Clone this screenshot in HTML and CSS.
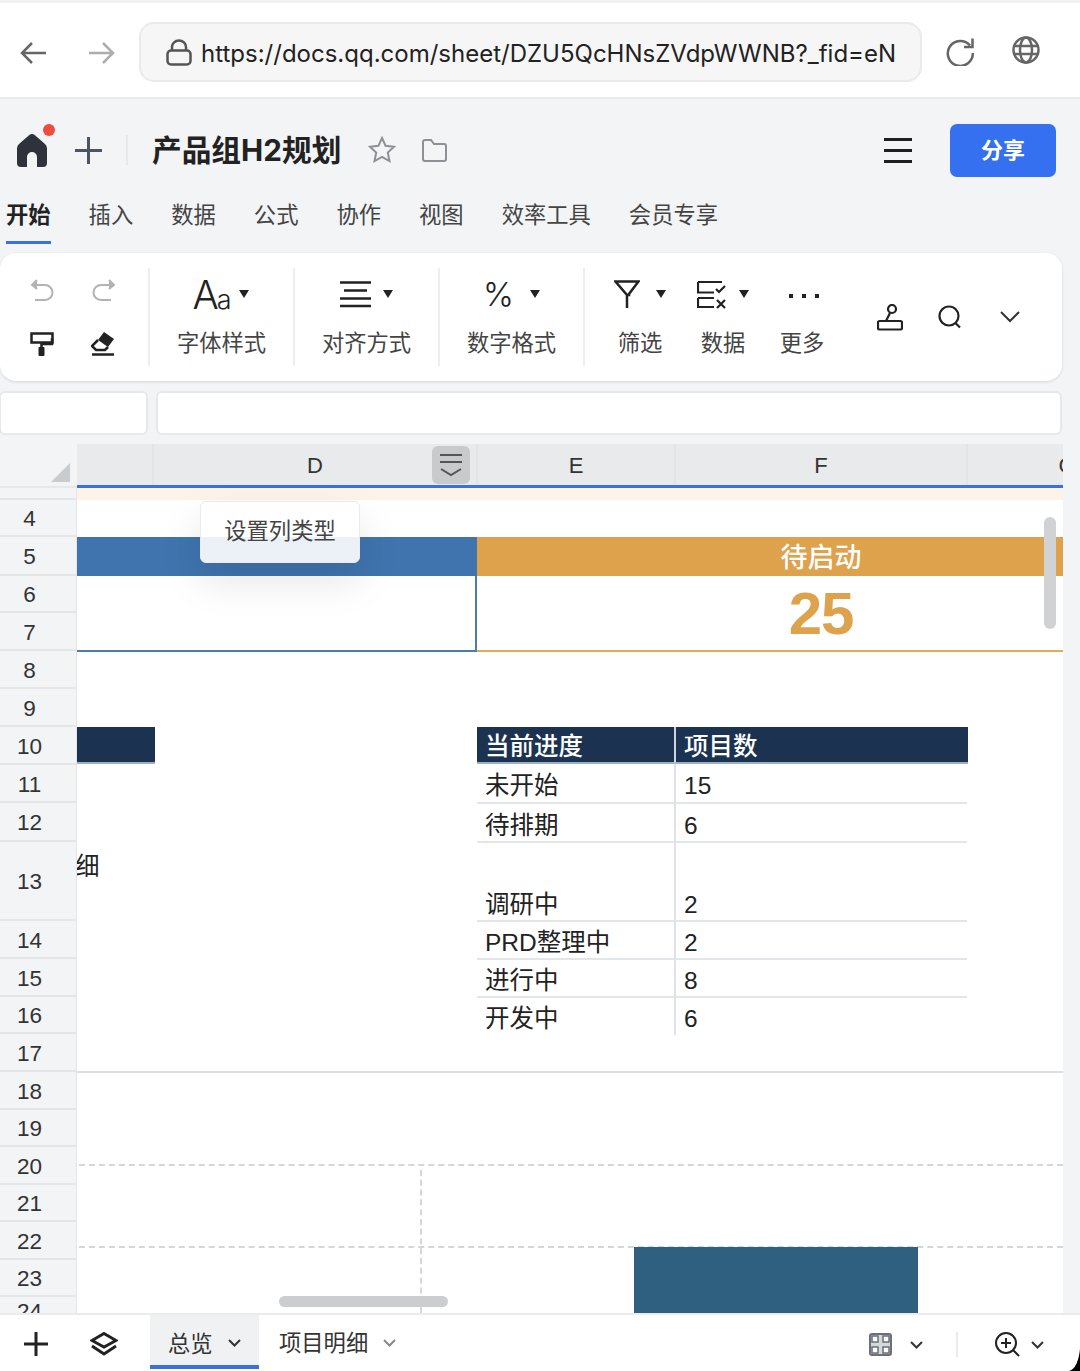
FILE: index.html
```html
<!DOCTYPE html>
<html lang="zh-CN">
<head>
<meta charset="utf-8">
<title>产品组H2规划</title>
<link rel="stylesheet" href="styles.css">
</head>
<body>
<div class="page">
  <header class="browser">
    <svg class="i back" width="26" height="22" viewBox="0 0 26 22"><path d="M12 1 2 11l10 10M2 11h24"/></svg>
    <svg class="i forward" width="26" height="22" viewBox="0 0 26 22"><path d="M14 1l10 10-10 10M24 11H0"/></svg>
    <div class="address">
      <svg class="i lock" width="26" height="27" viewBox="0 0 26 27"><rect x="1.5" y="11.5" width="23" height="14" rx="3.5"/><path d="M6 11V8a7 6.5 0 0 1 14 0v3"/></svg>
      <span class="url">https://docs.qq.com/sheet/DZU5QcHNsZVdpWWNB?_fid=eN</span>
    </div>
    <svg class="i reload" width="29" height="30" viewBox="0 0 29 30"><path d="M24 9.5A12.5 12.5 0 1 0 26.8 17"/><path d="M26.5 2.5v8.5H18"/></svg>
    <svg class="i globe" width="28" height="28" viewBox="0 0 28 28"><circle cx="14" cy="14" r="12.5"/><ellipse cx="14" cy="14" rx="6" ry="12.5"/><path d="M2 10h24M2 18h24"/></svg>
  </header>

  <section class="titlebar">
    <div class="home">
      <svg width="30" height="33" viewBox="0 0 30 33"><path class="home-shape" d="M15 0q1.500 0 3 1.300L28 10q2 1.800 2 4.500V29a4 4 0 0 1-4 4h-6V23a5 5 0 0 0-10 0v10H4a4 4 0 0 1-4-4V14.500Q0 11.800 2 10L12 1.300Q13.500 0 15 0z"/></svg>
      <span class="dot"></span>
    </div>
    <svg class="i plus" width="27" height="27" viewBox="0 0 27 27"><path d="M13.500 0v27M0 13.500h27"/></svg>
    <span class="vline"></span>
    <h1 class="doc-title">产品组H2规划</h1>
    <svg class="i star" width="28" height="28" viewBox="0 0 28 28"><path d="M14 2l3.600 7.800 8.400 1-6.200 5.800 1.700 8.400L14 20.800 6.500 25l1.700-8.400L2 10.800l8.400-1z"/></svg>
    <svg class="i folder" width="25" height="23" viewBox="0 0 25 23"><path d="M1 3a2 2 0 0 1 2-2h6l3 4h10a2 2 0 0 1 2 2v13a2 2 0 0 1-2 2H3a2 2 0 0 1-2-2z"/></svg>
    <span class="spacer"></span>
    <svg class="i menu" width="28" height="25" viewBox="0 0 28 25"><path d="M0 1.500h28M0 12.500h28M0 23.500h28"/></svg>
    <button class="share">分享</button>
  </section>

  <nav class="tabs">
    <span class="tab active">开始</span>
    <span class="tab">插入</span>
    <span class="tab">数据</span>
    <span class="tab">公式</span>
    <span class="tab">协作</span>
    <span class="tab">视图</span>
    <span class="tab">效率工具</span>
    <span class="tab">会员专享</span>
  </nav>

  <section class="toolbar">
    <div class="group history">
      <svg class="i undo" width="25" height="22" viewBox="0 0 25 22"><path d="M7 1 2 6l5 4" class="fillhead"/><path d="M3 6h12a7.500 7.500 0 0 1 0 15H5"/></svg>
      <svg class="i undo" width="25" height="22" viewBox="0 0 25 22"><path d="M18 1l5 5-5 4" class="fillhead"/><path d="M22 6H10a7.500 7.500 0 0 0 0 15h10"/></svg>
      <svg class="i dark" width="24" height="24" viewBox="0 0 24 24"><path d="M1.500 1.500h21v9h-21z"/><path d="M22 6v6H11.500v4"/><rect class="solid" x="8.500" y="15" width="6" height="9" rx="1"/></svg>
      <svg class="i dark" width="24" height="25" viewBox="0 0 24 25"><path class="solid" d="M13 1l10 7-6 8L7 9z"/><path d="M7 9l-6 6 4 4h9l3-3"/><path d="M1 23.500h22"/></svg>
    </div>
    <div class="group bordered">
      <div class="tool-icon gap9"><span class="aa">A<small>a</small></span><i class="caret"></i></div>
      <div class="tool-label">字体样式</div>
    </div>
    <div class="group bordered">
      <div class="tool-icon gap12">
        <svg class="i dark" width="31" height="27" viewBox="0 0 31 27"><path d="M0 1.500h31M4 9.500h23M0 17.500h31M0 25h31" /></svg>
        <i class="caret"></i></div>
      <div class="tool-label">对齐方式</div>
    </div>
    <div class="group bordered">
      <div class="tool-icon gap16"><span class="percent">%</span><i class="caret"></i></div>
      <div class="tool-label">数字格式</div>
    </div>
    <div class="group filter">
      <div class="tool-icon gap16">
        <svg class="i dark" width="26" height="29" viewBox="0 0 26 29"><path d="M1.500 1.500h23L15 14v1H13L1.500 1.500zM13 14v14"/></svg>
        <i class="caret"></i></div>
      <div class="tool-label">筛选</div>
    </div>
    <div class="group data">
      <div class="tool-icon gap12">
        <svg class="i dark thin" width="30" height="29" viewBox="0 0 30 29"><path d="M1 2h24M1 2v10.500h16M1 18v9h16M1 18h16M19 9l3 3 6-6M20 20l8 8M28 20l-8 8"/></svg>
        <i class="caret"></i></div>
      <div class="tool-label">数据</div>
    </div>
    <div class="group more">
      <div class="tool-icon dots"><i></i><i></i><i></i></div>
      <div class="tool-label">更多</div>
    </div>
    <div class="tool-side first">
      <svg class="i dark thin" width="26" height="27" viewBox="0 0 26 27"><circle cx="15" cy="5" r="4"/><path d="M13 9l-4 8"/><rect x="1" y="17" width="24" height="8.500" rx="1.500"/></svg>
    </div>
    <div class="tool-side">
      <svg class="i dark thin" width="24" height="24" viewBox="0 0 24 24"><circle cx="11" cy="11" r="9.500"/><path d="M17.500 18l4.500 4.500"/></svg>
    </div>
    <div class="tool-side">
      <svg class="i chevron-lg" width="20" height="12" viewBox="0 0 20 12"><path d="M1 1l9 9 9-9"/></svg>
    </div>
  </section>

  <section class="formula">
    <div class="namebox"></div>
    <div class="formulabox"></div>
  </section>

  <section class="sheet">
    <div class="corner"><span class="tri"></span></div>
    <div class="colhead">
      <div class="col c-c"></div>
      <div class="col c-d">D</div>
      <div class="col c-e">E</div>
      <div class="col c-f">F</div>
      <div class="col c-g">G</div>
      <span class="colbtn">
        <svg class="i mid" width="24" height="24" viewBox="0 0 24 24"><path d="M1 2h22M1 9h22M2 16l10 6 10-6"/></svg>
      </span>
    </div>

    <div class="rowhead">
      <div class="rn r3"></div>
      <div class="rn r37">4</div>
      <div class="rn r39">5</div>
      <div class="rn r37">6</div>
      <div class="rn r38">7</div>
      <div class="rn r38">8</div>
      <div class="rn r38">9</div>
      <div class="rn r38">10</div>
      <div class="rn r38">11</div>
      <div class="rn r39">12</div>
      <div class="rn r79">13</div>
      <div class="rn r38">14</div>
      <div class="rn r38">15</div>
      <div class="rn r37">16</div>
      <div class="rn r38">17</div>
      <div class="rn r38">18</div>
      <div class="rn r37">19</div>
      <div class="rn r38">20</div>
      <div class="rn r37">21</div>
      <div class="rn r38">22</div>
      <div class="rn r37">23</div>
      <div class="rn r16">24</div>
    </div>

    <div class="grid">
      <div class="peach"></div>
      <div class="band-blue"></div>
      <div class="band-orange"></div>
      <div class="band-label">待启动</div>
      <div class="value-blue"></div>
      <div class="value-line"></div>
      <div class="value-orange">25</div>

      <div class="dark-stub"></div>
      <div class="th a">当前进度</div>
      <div class="th b">项目数</div>

      <div class="clip-text">细</div>

      <div class="td a g11">未开始</div><div class="td b g11">15</div>
      <div class="td a g12">待排期</div><div class="td b g12">6</div>
      <div class="td a g13">调研中</div><div class="td b g13">2</div>
      <div class="td a g14">PRD整理中</div><div class="td b g14">2</div>
      <div class="td a g15">进行中</div><div class="td b g15">8</div>
      <div class="td a g16 last">开发中</div><div class="td b g16 last">6</div>

      <div class="rule"></div>
    </div>

    <div class="chart">
      <span class="dash h1"></span>
      <span class="dash h2"></span>
      <span class="dash v1"></span>
      <span class="bar"></span>
    </div>
    <span class="hscroll"></span>
    <span class="vscroll"></span>
    <div class="tip">设置列类型</div>
    <div class="edge"></div>
  </section>

  <footer class="sheetbar">
    <svg class="i foot-plus" width="24" height="24" viewBox="0 0 24 24"><path d="M12 0v24M0 12h24"/></svg>
    <svg class="i foot-layers" width="28" height="24" viewBox="0 0 28 24"><path d="M14 1.500 26 8.500 14 15 2 8.500z"/><path d="M2 14l12 8 12-8"/></svg>
    <div class="stab on"><span>总览</span><svg class="i chev" width="13" height="8" viewBox="0 0 13 8"><path d="M1 1l5.500 5.500L12 1"/></svg></div>
    <div class="stab"><span>项目明细</span><svg class="i chev light" width="13" height="8" viewBox="0 0 13 8"><path d="M1 1l5.500 5.500L12 1"/></svg></div>
    <span class="spacer"></span>
    <svg class="gridicon" width="23" height="23" viewBox="0 0 23 23"><rect x="1" y="1" width="21" height="21" rx="2" fill="#d4d7dc" stroke="#6c6f78" stroke-width="2"/><path d="M3 3h6v6H3zM14 3h6v6h-6zM3 14h6v6H3zM14 14h6v6h-6z" fill="#fff" stroke="#6c6f78" stroke-width="1.500"/></svg>
    <svg class="i chev after-grid" width="13" height="8" viewBox="0 0 13 8"><path d="M1 1l5.500 5.500L12 1"/></svg>
    <span class="foot-div"></span>
    <svg class="i zoomicon" width="25" height="25" viewBox="0 0 25 25"><circle cx="11" cy="11" r="10"/><path d="M11 6v10M6 11h10M18 18l6 6"/></svg>
    <svg class="i chev after-zoom" width="13" height="8" viewBox="0 0 13 8"><path d="M1 1l5.500 5.500L12 1"/></svg>
  </footer>
</div>
</body>
</html>
```
FILE: styles.css
```css
* { box-sizing: border-box; }
html, body { margin: 0; padding: 0; }
body {
  width: 1080px;
  height: 1371px;
  overflow: hidden;
  background: #000;
  font-family: "Liberation Sans", "Noto Sans CJK SC", sans-serif;
  color: #333;
}
.page {
  width: 1080px;
  height: 1371px;
  background: #f2f4f6;
  display: flex;
  flex-direction: column;
  position: relative;
  overflow: hidden;
  border-bottom-right-radius: 12px 26px;
}
.spacer { flex: 1; }

/* svg icons */
.i { fill: none; stroke: #666; stroke-width: 2.5; flex: none; display: block; }
.i.dark { stroke: #222; stroke-width: 2.5; }
.i.thin { stroke-width: 2.2; }
.i.mid { stroke: #555; stroke-width: 2; }
.solid { fill: #222; stroke: none; }

/* browser */
.browser {
  height: 99px;
  background: #fff;
  border-top: 3px solid #f1f1f2;
  border-bottom: 2px solid #e9ebed;
  display: flex;
  align-items: center;
  flex: none;
}
.back { margin-left: 20px; margin-top: 6px; }
.forward { margin-left: 43px; margin-top: 6px; stroke: #adadad; }
.address {
  width: 783px;
  height: 60px;
  margin-top: 4px;
  margin-left: 24px;
  background: #f6f6f7;
  border: 2px solid #e9eaeb;
  border-radius: 15px;
  display: flex;
  align-items: center;
  padding-left: 25px;
}
.lock { stroke: #555; margin-top: 0; }
.url {
  margin-left: 9px;
  padding-top: 2px;
  font-family: "Inter", "Liberation Sans", sans-serif;
  font-size: 24px;
  color: #222;
  white-space: nowrap;
}
.reload { margin-left: 24px; stroke: #666; margin-top: 1px; }
.globe { margin-left: 37px; stroke: #666; }

/* title row */
.titlebar {
  height: 100px;
  flex: none;
  display: flex;
  align-items: center;
  padding-top: 2px;
}
.home { margin-left: 17px; position: relative; width: 30px; height: 33px; }
.home svg { display: block; }
.home-shape { fill: #2e333b; }
.dot {
  position: absolute;
  left: 26px;
  top: -10px;
  width: 12px;
  height: 12px;
  border-radius: 50%;
  background: #ee4b41;
}
.plus { margin-left: 28px; stroke: #4d5461; stroke-width: 3; }
.vline { width: 2px; height: 30px; background: #e6e8ea; margin-left: 24px; }
.doc-title {
  margin: -3px 0 0 24px;
  font-family: "Inter", "Liberation Sans", "Noto Sans CJK SC", sans-serif;
  font-size: 29.700px;
  font-weight: 700;
  color: #222;
  white-space: nowrap;
  width: 189px;
}
.star { margin-left: 27px; stroke: #8d9196; stroke-width: 2; }
.folder { margin-left: 26px; stroke: #8d9196; stroke-width: 2; }
.menu { stroke: #1f1f1f; stroke-width: 3; }
.share {
  margin-left: 38px;
  margin-right: 24px;
  width: 106px;
  height: 53px;
  border: 0;
  border-radius: 7px;
  background: #3470ef;
  color: #fff;
  font-family: "Noto Sans CJK SC", sans-serif;
  font-size: 22px;
  font-weight: 700;
  padding: 0 0 4px;
}

/* menu tabs */
.tabs {
  height: 54px;
  flex: none;
  display: flex;
  gap: 38px;
  padding-left: 6px;
  font-family: "Noto Sans CJK SC", sans-serif;
  font-size: 22.300px;
  color: #444;
}
.tab { height: 45px; line-height: 28px; white-space: nowrap; }
.tab.active {
  font-weight: 700;
  color: #222;
  border-bottom: 3px solid #3a6fe6;
}

/* toolbar */
.toolbar {
  width: 1062px;
  height: 128px;
  flex: none;
  background: #fff;
  border-radius: 16px;
  box-shadow: 0 1px 3px rgba(0,0,0,.12);
  display: flex;
  align-items: stretch;
  padding: 15px 0;
  font-family: "Noto Sans CJK SC", sans-serif;
}
.group { display: flex; flex-direction: column; align-items: center; flex: none; width: 145px; }
.group.bordered { border-right: 2px solid #eceef0; }
.group.history {
  width: 150px;
  border-right: 2px solid #eceef0;
  display: grid;
  grid-template-columns: 25px 25px;
  column-gap: 36px;
  row-gap: 30px;
  justify-content: start;
  align-content: start;
  padding: 11px 0 0 30px;
}
.undo { stroke: #b3b3b3; stroke-width: 2; }
.fillhead { fill: #b3b3b3; }
.group.filter { margin-left: 13px; width: 84px; }
.group.data { width: 82px; }
.group.more { width: 76px; }
.tool-icon { height: 52px; margin-bottom: 2px; display: flex; align-items: center; justify-content: center; }
.gap9 { gap: 9px; } .gap12 { gap: 12px; } .gap16 { gap: 16px; }
.tool-label { height: 42px; line-height: 38px; font-size: 22.300px; color: #444; white-space: nowrap; }
.caret {
  width: 0; height: 0;
  border-left: 5.500px solid transparent;
  border-right: 5.500px solid transparent;
  border-top: 8px solid #222;
  margin-top: -1px;
}
.aa {
  font-family: "Inter", sans-serif;
  font-weight: 300;
  font-size: 39px;
  line-height: 1;
  color: #222;
  letter-spacing: -2px;
  margin-left: -2px;
}
.aa small { font-size: 27px; }
.percent { font-family: "Inter", sans-serif; font-weight: 300; font-size: 33px; line-height: 1; color: #222; }
.dots { gap: 9px; padding: 3px 0 0 3px; }
.dots i { width: 4px; height: 4px; background: #222; display: block; }
.tool-side { width: 60px; display: flex; align-items: center; justify-content: center; height: 98px; }
.tool-side.first { margin-left: 20px; }
.chevron-lg { stroke: #333; stroke-width: 2; }

/* formula row */
.formula {
  height: 63px;
  flex: none;
  display: flex;
  gap: 8px;
  padding-top: 10px;
}
.namebox, .formulabox {
  height: 44px;
  background: #fff;
  border: 2px solid #e6e8ea;
  border-radius: 6px;
}
.namebox { width: 149px; margin-left: -1px; }
.formulabox { width: 906px; }

/* sheet */
.sheet {
  height: 869px;
  flex: none;
  position: relative;
  display: grid;
  grid-template-columns: 77px 986px 17px;
  grid-template-rows: 44px 825px;
  overflow: hidden;
}
.corner { position: relative; border-bottom: 2px solid #e6e8ea; }
.tri {
  position: absolute;
  left: 51px;
  top: 19px;
  width: 0; height: 0;
  border-left: 19px solid transparent;
  border-bottom: 19px solid #c9cccf;
}
.colhead {
  position: relative;
  display: grid;
  grid-template-columns: 77px 324px 198px 292px 200px;
  background: #e8eaec;
  border-bottom: 3px solid #3a6fe6;
  overflow: hidden;
  font-size: 22px;
  color: #333;
}
.col {
  display: flex;
  align-items: center;
  justify-content: center;
  border-right: 2px solid #e2e4e6;
  height: 41px;
  padding-top: 2px;
}
.colbtn {
  position: absolute;
  left: 355px;
  top: 2px;
  width: 38px;
  height: 38px;
  background: #c8cacc;
  border-radius: 6px;
  display: flex;
  align-items: center;
  justify-content: center;
}
.rowhead {
  grid-column: 1;
  grid-row: 2;
  display: flex;
  flex-direction: column;
  font-size: 22.500px;
  color: #333;
  overflow: hidden;
}
.rn {
  flex: none;
  width: 77px;
  padding-right: 17px;
  padding-top: 3px;
  display: flex;
  align-items: center;
  justify-content: center;
  border-bottom: 2px solid #e3e5e7;
  border-right: 1px solid #e3e5e7;
}
.r3 { height: 12px; padding-top: 0; }
.r37 { height: 37px; }
.r38 { height: 38px; }
.r39 { height: 39px; }
.r79 { height: 79px; }
.r16 { height: 16px; align-items: flex-start; border-bottom: 0; padding-top: 2px; overflow: hidden; }

.grid {
  grid-column: 2;
  grid-row: 2;
  background: #fff;
  display: grid;
  grid-template-columns: 78px 322px 198px 292px 96px;
  grid-template-rows: 12px 37px 39px 37px 39px 37px 38px 37px 40px 39px 79px 38px 38px 37px 38px 37px 1fr;
  overflow: hidden;
  font-size: 24.500px;
  color: #222;
}
.peach { grid-column: 1 / -1; grid-row: 1; background: #fdf3e6; }
.band-blue { grid-column: 1 / 3; grid-row: 3; background: #3f74ae; }
.band-orange { grid-column: 3 / -1; grid-row: 3; background: #dea14c; }
.band-label {
  grid-column: 4;
  grid-row: 3;
  color: #fff;
  font-weight: 500;
  text-align: center;
  font-size: 27px;
  line-height: 42px;
  white-space: nowrap;
}
.value-blue {
  grid-column: 1 / 3;
  grid-row: 4 / 6;
  border-right: 2px solid #4a7cb0;
  border-bottom: 2px solid #4a7cb0;
}
.value-line { grid-column: 3 / -1; grid-row: 4 / 6; border-bottom: 2px solid #e3aa5c; }
.value-orange {
  grid-column: 4;
  grid-row: 4 / 6;
  color: #dea14c;
  font-weight: 700;
  font-size: 60px;
  line-height: 75px;
  text-align: center;
  letter-spacing: -1px;
}
.dark-stub { grid-column: 1; grid-row: 8; background: #1b3250; border-bottom: 2px solid #9fb0c3; }
.th {
  grid-row: 8;
  background: #1b3250;
  color: #fff;
  font-weight: 500;
  display: flex;
  align-items: center;
  padding-left: 8px;
  padding-top: 5px;
  line-height: 30px;
  border-bottom: 2px solid #9fb0c3;
}
.a { grid-column: 3; }
.b { grid-column: 4; border-left: 2px solid #dfe3e7; margin-left: -1px; }
.td {
  display: flex;
  align-items: center;
  padding-left: 8px;
  padding-top: 6px;
  line-height: 30px;
  border-bottom: 2px solid #e3e6e9;
  white-space: nowrap;
}
.th.b { border-left: 2px solid #cfd6de; margin-right: -1px; }
.g11 { grid-row: 9; } .g12 { grid-row: 10; }
.g13 { grid-row: 11; align-items: flex-end; }
.g14 { grid-row: 12; } .g15 { grid-row: 13; } .g16 { grid-row: 14; }
.td.last { border-bottom: 0; padding-top: 4px; }
.clip-text {
  grid-column: 1;
  grid-row: 11;
  overflow: hidden;
  line-height: 48px;
  text-indent: -2px;
}
.rule { grid-column: 1 / -1; grid-row: 15; border-bottom: 2px solid #dcdee0; }
.edge { grid-column: 3; grid-row: 1 / 3; background: #f2f4f6; }

/* chart object over the grid */
.chart {
  position: absolute;
  left: 79px;
  top: 720px;
  width: 984px;
  height: 149px;
  overflow: hidden;
}
.dash { position: absolute; display: block; }
.h1, .h2 {
  left: 0;
  width: 984px;
  height: 0;
  border-top: 2px dashed #d4d6d9;
}
.h1 { top: 0; }
.h2 { top: 82px; }
.v1 { left: 341px; top: 6px; height: 143px; border-left: 2px dashed #d4d6d9; }
.bar { position: absolute; left: 555px; top: 83px; width: 284px; height: 66px; background: #2f607f; }
.hscroll {
  position: absolute;
  left: 279px;
  top: 852px;
  width: 169px;
  height: 11px;
  border-radius: 6px;
  background: #cbcdcf;
}
.vscroll {
  position: absolute;
  left: 1044px;
  top: 73px;
  width: 12px;
  height: 112px;
  border-radius: 6px;
  background: #d0d2d4;
}
.tip {
  position: absolute;
  left: 200px;
  top: 57px;
  width: 160px;
  height: 62px;
  padding-top: 11px;
  text-align: center;
  border-radius: 6px;
  border: 1px solid #e9ebee;
  background: rgba(255,255,255,.9);
  box-shadow: 0 18px 40px rgba(0,0,0,.1);
  font-family: "Noto Sans CJK SC", sans-serif;
  font-size: 22.300px;
  line-height: 32px;
  color: #444;
}

/* bottom bar */
.sheetbar {
  height: 58px;
  flex: none;
  background: #fff;
  border-top: 2px solid #e9ebed;
  display: flex;
  align-items: center;
  font-family: "Noto Sans CJK SC", sans-serif;
  font-size: 22.300px;
  color: #333;
  position: relative;
  border-bottom-right-radius: 12px 26px;
}
.foot-plus { margin-left: 24px; stroke: #222; stroke-width: 3; margin-top: 1px; }
.foot-layers { margin-left: 42px; stroke: #222; stroke-width: 3; margin-top: 1px; }
.stab {
  display: flex;
  align-items: center;
  height: 54px;
  white-space: nowrap;
}
.stab svg { margin-top: 3px; }
.stab.on {
  margin-left: 32px;
  width: 109px;
  padding-left: 18px;
  padding-top: 3px;
  background: #f0f1f3;
  border-bottom: 4px solid #3a6fe0;
  align-self: flex-start;
  gap: 15px;
}
.stab:not(.on) { margin-left: 20px; gap: 15px; align-self: flex-start; height: 54px; padding-bottom: 2px; }
.chev { stroke: #333; stroke-width: 2; }
.chev.light { stroke: #888; }
.gridicon { flex: none; margin-top: 2px; }
.after-grid { margin-left: 18px; margin-top: 3px; }
.foot-div { width: 2px; height: 25px; background: #e9ebed; margin-left: 33px; margin-top: 2px; }
.zoomicon { margin-left: 37px; stroke: #222; stroke-width: 2; margin-top: 2px; }
.after-zoom { margin-left: 11px; margin-right: 36px; margin-top: 3px; }
```
